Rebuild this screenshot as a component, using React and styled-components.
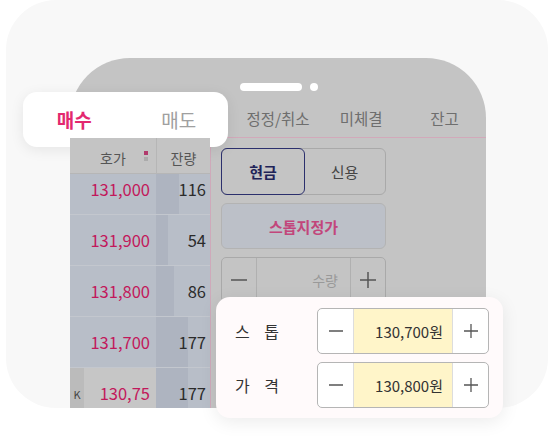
import React from "react";
import styled, { createGlobalStyle } from "styled-components";

const GlobalStyle = createGlobalStyle`
  body {
    margin: 0;
    padding: 0;
    background: #ffffff;
    font-family: "Noto Sans CJK KR", "Noto Sans", sans-serif;
  }
`;

const Stage = styled.div`
  position: relative;
  width: 550px;
  height: 442px;
  overflow: hidden;
`;

const Card = styled.div`
  margin-left: 6px;
  width: 542px;
  height: 408px;
  border-radius: 50px;
  background: #f8f8f8;
  overflow: hidden;
  padding: 58px 0 0 64px;
  box-sizing: border-box;
`;

const Phone = styled.div`
  width: 416px;
  height: 420px;
  border-radius: 60px 60px 0 0;
  background: #c4c4c4;
  display: flex;
  flex-direction: column;
`;

const Notch = styled.div`
  display: flex;
  justify-content: center;
  align-items: center;
  gap: 8px;
  height: 26px;
  padding-top: 16px;
  padding-left: 2px;
`;

const Pill = styled.div`
  width: ${p => p.w}px;
  height: 8px;
  border-radius: 4px;
  background: #ffffff;
`;

const Tabs = styled.div`
  display: grid;
  grid-template-columns: repeat(5, 1fr);
  height: 37px;
  border-bottom: 1px solid #d2a9ba;
`;

const Tab = styled.div`
  display: flex;
  align-items: center;
  justify-content: center;
  font-size: 15.5px;
  color: #6e6e6e;
  padding-bottom: 2px;
  white-space: nowrap;
`;

const Body = styled.div`
  display: flex;
  flex: 1;
`;

const Book = styled.div`
  width: 140px;
  border-right: 1px solid #cfa9ba;
  display: flex;
  flex-direction: column;
`;

const BookHead = styled.div`
  position: relative;
  z-index: 1;
  display: grid;
  grid-template-columns: 86px 54px;
  height: 35px;
  background: #c4c4c4;
  border-bottom: 1px solid #b6b6b6;
`;

const HeadCell = styled.div`
  position: relative;
  display: flex;
  align-items: center;
  justify-content: ${p => p.center ? "center" : "flex-start"};
  padding-left: ${p => p.center ? 0 : 30}px;
  padding-top: 4px;
  font-size: 14px;
  color: #555555;
  border-left: ${p => p.center ? "1px solid #b6b6b6" : "none"};
`;

const Marker = styled.span`
  position: absolute;
  right: 8px;
  top: 13px;
  display: flex;
  flex-direction: column;
  gap: 2px;
  & > i {
    display: block;
    width: 4px;
    height: 4px;
    background: #b13a6c;
  }
  & > i + i {
    background: #ababab;
  }
`;

const Rows = styled.div`
  margin-top: -10px;
`;

const Row = styled.div`
  display: grid;
  grid-template-columns: 86px 54px;
  height: 51px;
  border-bottom: 1px solid #c3c7ce;
  box-sizing: border-box;
`;

const PriceCell = styled.div`
  display: flex;
  background: ${p => p.current ? "#c6c6c6" : "#b8bec8"};
`;

const Strip = styled.div`
  width: 14px;
  background: #bbbbbb;
  font-size: 11px;
  color: #444;
  display: flex;
  justify-content: center;
  padding-top: 18px;
  box-sizing: border-box;
`;

const Price = styled.div`
  flex: 1;
  padding: 15px 6px 0 ${p => p.current ? 12 : 0}px;
  line-height: 20px;
  font-size: 16.5px;
  color: #c2185b;
  text-align: right;
  word-break: break-all;
`;

const QtyCell = styled.div`
  position: relative;
  background: #b8bec8;
  padding: 15px 4px 0 0;
  line-height: 20px;
  font-size: 16.5px;
  color: #2b2b2b;
  text-align: right;
`;

const QtyBar = styled.span`
  position: absolute;
  left: 0;
  top: 0;
  bottom: 0;
  background: #aeb4c0;
`;

const QtyText = styled.span`
  position: relative;
`;

const Panel = styled.div`
  width: 165px;
  margin-left: 10px;
  padding-top: 10px;
  display: flex;
  flex-direction: column;
  gap: 8px;
`;

const Toggle = styled.div`
  display: grid;
  grid-template-columns: 82px 1fr;
  height: 47px;
  border: 1px solid #a9a9a9;
  border-radius: 6px;
  box-sizing: border-box;
`;

const ToggleItem = styled.div`
  display: flex;
  align-items: center;
  justify-content: center;
  font-size: 15px;
  margin: ${p => p.active ? "-1px" : "0"};
  border: ${p => p.active ? "1.5px solid #2c306d" : "none"};
  border-radius: 6px;
  font-weight: ${p => p.active ? 700 : 400};
  color: ${p => p.active ? "#1f2358" : "#454545"};
`;

const StopButton = styled.div`
  height: 46px;
  border: 1px solid #b3b3b3;
  border-radius: 6px;
  background: #bcc0c8;
  box-sizing: border-box;
  display: flex;
  align-items: center;
  justify-content: center;
  font-size: 15px;
  font-weight: 700;
  color: #c2467b;
`;

const Stepper = styled.div`
  display: grid;
  grid-template-columns: ${p => p.side}px 1fr ${p => p.side}px;
  height: 46px;
  border: 1px solid ${p => p.line};
  border-radius: 5px;
  box-sizing: border-box;
  overflow: hidden;
`;

const StepButton = styled.div`
  display: flex;
  align-items: center;
  justify-content: center;
  color: ${p => p.tone};
`;

const StepValue = styled.div`
  display: flex;
  align-items: center;
  justify-content: flex-end;
  padding-right: ${p => p.pad}px;
  border-left: 1px solid ${p => p.line};
  border-right: 1px solid ${p => p.line};
  background: ${p => p.fill || "transparent"};
  font-size: ${p => p.size}px;
  color: ${p => p.tone};
`;

const SidePopup = styled.div`
  position: absolute;
  left: 23px;
  top: 92px;
  width: 205px;
  height: 55px;
  border-radius: 14px;
  background: #ffffff;
  box-shadow: 0 3px 14px rgba(0, 0, 0, 0.08);
  display: grid;
  grid-template-columns: 1fr 1fr;
`;

const SideItem = styled.div`
  display: flex;
  align-items: center;
  justify-content: center;
  font-size: 19px;
  font-weight: ${p => p.active ? 700 : 400};
  color: ${p => p.active ? "#e3286f" : "#a0a0a0"};
  padding-left: ${p => p.active ? 0 : 4}px;
`;

const StopPopup = styled.div`
  position: absolute;
  left: 216px;
  top: 297px;
  width: 287px;
  height: 121px;
  border-radius: 14px;
  background: #fffafb;
  box-shadow: 0 4px 18px rgba(0, 0, 0, 0.08);
  padding: 11px 14px 0 19px;
  box-sizing: border-box;
  display: flex;
  flex-direction: column;
  gap: 8px;
`;

const FieldRow = styled.div`
  display: flex;
  align-items: center;
  justify-content: space-between;
`;

const Label = styled.div`
  width: 44px;
  font-size: 16px;
  color: #333333;
  text-align: justify;
  text-align-last: justify;
`;

const FieldStepper = styled(Stepper)`
  width: 172px;
  background: #ffffff;
`;

const Minus = ({ size = 14 }) => (
  <svg width={size} height={size} viewBox="0 0 14 14">
    <line x1="0" y1="7" x2="14" y2="7" stroke="currentColor" strokeWidth="1.3" />
  </svg>
);

const Plus = ({ size = 14 }) => (
  <svg width={size} height={size} viewBox="0 0 14 14">
    <line x1="0" y1="7" x2="14" y2="7" stroke="currentColor" strokeWidth="1.3" />
    <line x1="7" y1="0" x2="7" y2="14" stroke="currentColor" strokeWidth="1.3" />
  </svg>
);

const book = [
  { price: "131,000", qty: 116, bar: 23 },
  { price: "131,900", qty: 54, bar: 12 },
  { price: "131,800", qty: 86, bar: 18 },
  { price: "131,700", qty: 177, bar: 32 },
  { price: "130,750", qty: 177, bar: 32, current: true },
];

const fields = [
  { label: "스 톱", value: "130,700원" },
  { label: "가 격", value: "130,800원" },
];

export default function App() {
  return (
    <React.Fragment>
      <GlobalStyle />
      <Stage>
        <Card>
          <Phone>
            <Notch>
              <Pill w={62} />
              <Pill w={8} />
            </Notch>
            <Tabs>
              {["매수", "매도", "정정/취소", "미체결", "잔고"].map(t => (
                <Tab key={t}>{t}</Tab>
              ))}
            </Tabs>
            <Body>
              <Book>
                <BookHead>
                  <HeadCell>
                    호가
                    <Marker><i /><i /></Marker>
                  </HeadCell>
                  <HeadCell center>잔량</HeadCell>
                </BookHead>
                <Rows>
                  {book.map(r => (
                    <Row key={r.price}>
                      <PriceCell current={r.current}>
                        {r.current && <Strip>K</Strip>}
                        <Price current={r.current}>{r.price}</Price>
                      </PriceCell>
                      <QtyCell>
                        <QtyBar style={{ width: r.bar }} />
                        <QtyText>{r.qty}</QtyText>
                      </QtyCell>
                    </Row>
                  ))}
                </Rows>
              </Book>
              <Panel>
                <Toggle>
                  <ToggleItem active>현금</ToggleItem>
                  <ToggleItem>신용</ToggleItem>
                </Toggle>
                <StopButton>스톱지정가</StopButton>
                <Stepper side={34} line="#a9a9a9">
                  <StepButton tone="#555"><Minus size={16} /></StepButton>
                  <StepValue pad={12} line="#b0b0b0" size={14} tone="#999">수량</StepValue>
                  <StepButton tone="#555"><Plus size={16} /></StepButton>
                </Stepper>
              </Panel>
            </Body>
          </Phone>
        </Card>

        <SidePopup>
          <SideItem active>매수</SideItem>
          <SideItem>매도</SideItem>
        </SidePopup>

        <StopPopup>
          {fields.map(f => (
            <FieldRow key={f.label}>
              <Label>{f.label}</Label>
              <FieldStepper side={35} line="#b5b5b5">
                <StepButton tone="#555"><Minus /></StepButton>
                <StepValue pad={9} line="#dddddd" fill="#fff5c9" size={15} tone="#333">
                  {f.value}
                </StepValue>
                <StepButton tone="#555"><Plus /></StepButton>
              </FieldStepper>
            </FieldRow>
          ))}
        </StopPopup>
      </Stage>
    </React.Fragment>
  );
}
